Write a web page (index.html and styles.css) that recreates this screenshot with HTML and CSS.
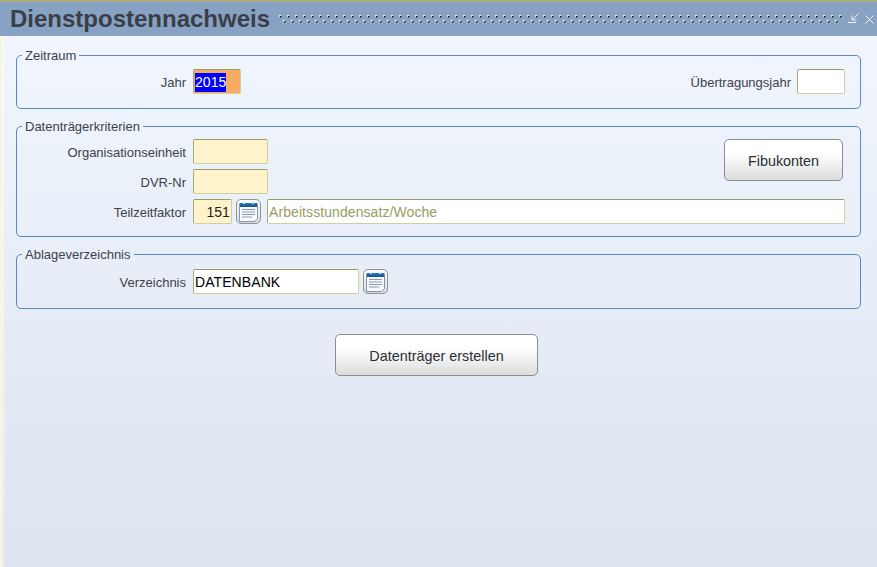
FILE: index.html
```html
<!DOCTYPE html>
<html lang="de">
<head>
<meta charset="utf-8">
<title>Dienstpostennachweis</title>
<link rel="stylesheet" href="styles.css">
</head>
<body>
<div class="window">
  <header class="titlebar">
    <h1 class="title">Dienstpostennachweis</h1>
    <svg class="dots" height="9" aria-hidden="true">
      <defs>
        <pattern id="dotpat" width="8" height="9" patternUnits="userSpaceOnUse">
          <rect x="0" y="0" width="2" height="1" fill="#eef2dc"/><rect x="0" y="1" width="1" height="1" fill="#cfdcc0"/>
          <rect x="1" y="1" width="2" height="1" fill="#2e343c"/><rect x="1" y="2" width="1" height="1" fill="#3e4650"/>
          <rect x="4" y="5" width="2" height="1" fill="#eef2dc"/><rect x="4" y="6" width="1" height="1" fill="#cfdcc0"/>
          <rect x="5" y="6" width="2" height="1" fill="#2e343c"/><rect x="5" y="7" width="1" height="1" fill="#3e4650"/>
        </pattern>
      </defs>
      <rect width="100%" height="9" fill="url(#dotpat)"/>
    </svg>
    <svg class="winicon" width="12" height="12" viewBox="0 0 12 12" aria-hidden="true"><path d="M10.5 .5 4.5 6.5M4 2.5V7h4.5M0 9.5h8" fill="none" stroke="#f2f5f8" stroke-width="1"/></svg>
    <svg class="winicon" width="9" height="9" viewBox="0 0 9 9" aria-hidden="true"><path d="M.5.5l8 8M8.5.5l-8 8" fill="none" stroke="#f2f5f8" stroke-width="1"/></svg>
  </header>
  <main class="content">
    <fieldset class="group">
      <legend>Zeitraum</legend>
      <div class="row">
        <label class="lbl">Jahr</label>
        <span class="field field-year"><span class="selected">2015</span></span>
        <span class="spacer"></span>
        <label class="lbl-plain">Übertragungsjahr</label>
        <span class="field field-white field-small"></span>
      </div>
    </fieldset>
    <fieldset class="group group-criteria">
      <legend>Datenträgerkriterien</legend>
      <div class="stack">
        <div class="row row-split">
          <div class="stack">
            <div class="row">
              <label class="lbl">Organisationseinheit</label>
              <span class="field field-req field-med"></span>
            </div>
            <div class="row">
              <label class="lbl">DVR-Nr</label>
              <span class="field field-req field-med"></span>
            </div>
          </div>
          <button class="btn btn-fibu" type="button">Fibukonten</button>
        </div>
        <div class="row">
          <label class="lbl">Teilzeitfaktor</label>
          <span class="field field-req field-num">151</span>
          <button class="lov" type="button" aria-label="Liste">
            <svg width="25" height="25" viewBox="0 0 25 25" aria-hidden="true"><use href="#cal"/></svg>
          </button>
          <span class="field field-white field-desc">Arbeitsstundensatz/Woche</span>
        </div>
      </div>
    </fieldset>
    <fieldset class="group group-dir">
      <legend>Ablageverzeichnis</legend>
      <div class="row">
        <label class="lbl">Verzeichnis</label>
        <span class="field field-white field-dir">DATENBANK</span>
        <button class="lov" type="button" aria-label="Liste">
          <svg width="25" height="25" viewBox="0 0 25 25" aria-hidden="true"><use href="#cal"/></svg>
        </button>
      </div>
    </fieldset>
    <div class="actions">
      <button class="btn btn-main" type="button">Datenträger erstellen</button>
    </div>
  </main>
</div>
<svg class="defs" width="0" height="0" aria-hidden="true">
  <defs>
    <linearGradient id="calbg" x1="0" y1="0" x2="0" y2="1"><stop offset="0" stop-color="#ffffff"/><stop offset="1" stop-color="#d5dae0"/></linearGradient>
    <linearGradient id="calband" x1="0" y1="0" x2="0" y2="1"><stop offset="0" stop-color="#2d7db8"/><stop offset="1" stop-color="#17527f"/></linearGradient>
    <g id="cal">
      <rect x="0.5" y="0.5" width="24" height="24" rx="4.5" fill="url(#calbg)" stroke="#8d9396"/>
      <path d="M3.5 4.5h18v15l-3 3h-15z" fill="#f6f8fa" stroke="#8496a8" stroke-width="1"/>
      <rect x="4" y="4" width="17" height="4" fill="url(#calband)"/>
      <rect x="7" y="3" width="2" height="2" fill="#cfe0ee"/><rect x="16" y="3" width="2" height="2" fill="#cfe0ee"/>
      <path d="M6 10.5h13M6 13h13M6 15.5h13M6 18h10" stroke="#8a9bb0" stroke-width="1"/>
    </g>
  </defs>
</svg>
</body>
</html>
```

FILE: styles.css
```css
html, body {
  margin: 0;
  padding: 0;
  height: 100%;
}
body {
  font-family: "Liberation Sans", Arial, sans-serif;
  font-size: 13px;
  color: #3d424a;
  overflow: hidden;
}
.window {
  height: 567px;
  box-sizing: border-box;
  border-top: 2px solid #a9ab7d;
  display: flex;
  flex-direction: column;
  background: linear-gradient(90deg, #f8f5dc 2px, rgba(255, 255, 255, 0.6) 2px, rgba(255, 255, 255, 0) 5px), linear-gradient(#f2f7fe, #dce4f0);
}
.titlebar {
  height: 34px;
  flex: none;
  display: flex;
  align-items: center;
  padding-left: 10px;
  padding-right: 3px;
  background: #87a2c3;
}
.title {
  margin: 0 9px 0 0;
  font-size: 24px;
  line-height: 34px;
  font-weight: bold;
  color: #3a3f47;
}
.dots {
  flex: 1;
  min-width: 0;
  margin-right: 5px;
}
.winicon {
  flex: none;
}
.winicon + .winicon {
  margin-left: 5px;
}
.content {
  flex: 1;
  padding: 12px 16px 0 16px;
  display: flex;
  flex-direction: column;
  gap: 10px;
}
.group {
  margin: -1px 0 0;
  padding: 6px 15px 14px 0;
  border: 1px solid #5b88bd;
  border-radius: 5px;
  min-width: 0;
}
.group-criteria {
  padding-top: 5px;
  padding-bottom: 12px;
}
.group-dir {
  padding-top: 7px;
}
.group legend {
  margin-left: 5px;
  padding: 2px 3px 0;
  font-size: 13px;
  line-height: 14px;
}
.row {
  display: flex;
  align-items: center;
}
.row-split {
  align-items: flex-start;
  justify-content: space-between;
}
.stack {
  display: flex;
  flex-direction: column;
  gap: 5px;
}
.lbl {
  width: 169px;
  margin-right: 7px;
  padding-top: 2px;
  text-align: right;
  flex: none;
}
.lbl-plain {
  margin-right: 6px;
  padding-top: 2px;
}
.spacer {
  flex: 1;
}
.field {
  box-sizing: border-box;
  height: 25px;
  line-height: 25px;
  display: block;
  flex: none;
  border: 1px solid #cfd0a0;
  border-top-color: #9a9c64;
  border-left-color: #a9ab7d;
  border-radius: 2px;
  font-size: 14px;
  letter-spacing: 0.08px;
  color: #000;
  padding: 0 1px;
}
.field-year {
  width: 48px;
  background: #f5ac62;
}
.selected {
  display: inline-block;
  background: #0000ff;
  color: #fff;
  line-height: 19px;
  vertical-align: middle;
  margin-top: -2px;
}
.field-white {
  background: #fff;
}
.field-small {
  width: 48px;
}
.field-req {
  background: #fff3cb;
}
.field-med {
  width: 75px;
}
.field-num {
  width: 39px;
  text-align: right;
  color: #1c1c1c;
}
.field-desc {
  width: 578px;
  margin-left: 6px;
  color: #9a9b62;
}
.field-dir {
  width: 166px;
}
.lov {
  padding: 0;
  margin: 0 0 0 4px;
  width: 25px;
  height: 25px;
  border: 0;
  background: none;
  line-height: 0;
  flex: none;
}
.btn {
  box-sizing: border-box;
  border: 1px solid #8a8c90;
  border-radius: 5px;
  background: linear-gradient(#ffffff 35%, #dcdcdc);
  font-family: "Liberation Sans", Arial, sans-serif;
  color: #2c2f33;
  font-size: 14.4px;
  padding: 2px 0 0;
}
.btn-fibu {
  width: 119px;
  height: 42px;
  margin-right: 2px;
}
.actions {
  display: flex;
  justify-content: center;
  padding-top: 15px;
  padding-right: 4px;
}
.btn-main {
  width: 203px;
  height: 42px;
}
.defs {
  position: absolute;
}
```
